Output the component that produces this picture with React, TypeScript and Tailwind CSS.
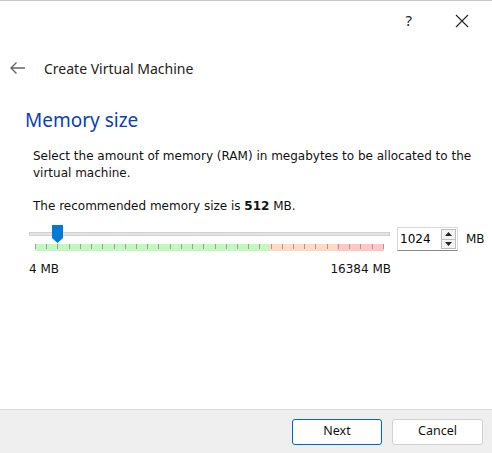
import React from "react";

const ticks = Array.from({ length: 32 }, (_, i) => i);

export default function App() {
  return (
    <div className="flex h-[453px] w-[492px] flex-col overflow-hidden bg-white font-['Noto_Sans',sans-serif] text-[#1a1a1a]">
      {/* title bar */}
      <div className="flex h-[40px] items-center justify-end border-t border-[#c8c8c8]">
        <span className="mr-[43px] text-[15px] text-[#222]">?</span>
        <svg className="mr-[23px] h-[14px] w-[14px]" viewBox="0 0 14 14" fill="none" stroke="#222" strokeWidth="1.1">
          <path d="M1 1 L13 13 M13 1 L1 13" />
        </svg>
      </div>

      {/* header */}
      <div className="flex h-[56px] items-center pl-[9px]">
        <svg className="h-[14px] w-[17px]" viewBox="0 0 17 14" fill="none" stroke="#666" strokeWidth="1.4">
          <path d="M16 7 H2 M7.5 1.5 L2 7 L7.5 12.5" />
        </svg>
        <span className="ml-[18px] text-[14px] text-[#222]">Create Virtual Machine</span>
      </div>

      {/* content */}
      <div className="flex-1 pl-[25px] pr-[7px]">
        <h1 className="mt-[10px] text-[19px] leading-[28px] text-[#0a3fb8]">Memory size</h1>

        <div className="mt-[14px] pl-[8px] font-['DejaVu_Sans',sans-serif] text-[12px] leading-[17px] text-[#111]">
          <p>Select the amount of memory (RAM) in megabytes to be allocated to the virtual machine.</p>
          <p className="mt-[16px]">
            The recommended memory size is <b>512</b> MB.
          </p>
        </div>

        <div className="mt-[10px] flex items-start">
          <div className="w-[366px] shrink-0 pl-[4px]">
            <div className="relative h-[26px]">
              <div className="absolute left-0 right-[1px] top-[7px] h-[4px] border border-[#d2d2d2] bg-[#e4e4e4]" />
              <svg className="absolute left-[23px] top-0 h-[18px] w-[11px]" viewBox="0 0 11 18">
                <path d="M0 0 H11 V13 L5.5 18 L0 13 Z" fill="#0078d7" />
              </svg>
              <div className="absolute left-[6px] top-[19px] flex h-[7px] w-[349px]">
                <div className="w-[234px] bg-[#c2f7c0]" />
                <div className="w-[68px] bg-[#ffd9c4]" />
                <div className="flex-1 bg-[#ffc6c6]" />
                <div className="absolute inset-x-0 top-0 flex justify-between">
                  {ticks.map((i) => (
                    <div key={i} className="h-[5px] w-px bg-[#a09a98]" />
                  ))}
                </div>
              </div>
            </div>
            <div className="mt-[9px] flex justify-between font-['DejaVu_Sans',sans-serif] text-[12px] text-[#111]">
              <span>4 MB</span>
              <span>16384 MB</span>
            </div>
          </div>

          <div className="ml-[6px] mt-[2px] flex h-[24px] w-[61px] shrink-0 items-stretch border border-[#d9d9d9] border-b-[#8a8a8a] bg-white">
            <span className="flex-1 pl-[2px] font-['DejaVu_Sans',sans-serif] text-[12px] leading-[22px] text-black">1024</span>
            <div className="my-[1px] mr-[1px] flex w-[15px] flex-col border border-[#bdbdbd] bg-[#f3f3f3]">
              <div className="flex flex-1 items-center justify-center border-b border-[#bdbdbd]">
                <svg width="7" height="4" viewBox="0 0 7 4"><path d="M0 4 L3.5 0 L7 4 Z" fill="#222" /></svg>
              </div>
              <div className="flex flex-1 items-center justify-center">
                <svg width="7" height="4" viewBox="0 0 7 4"><path d="M0 0 L3.5 4 L7 0 Z" fill="#222" /></svg>
              </div>
            </div>
          </div>
          <span className="ml-[8px] mt-[5px] font-['DejaVu_Sans',sans-serif] text-[12px] text-[#111]">MB</span>
        </div>
      </div>

      {/* footer */}
      <div className="flex h-[44px] items-center justify-end gap-[10px] border-t border-[#dcdcdc] bg-[#efefef] pr-[9px]">
        <button className="h-[26px] w-[90px] rounded-[3px] border border-[#0067c0] bg-white text-[12.5px] text-[#111]">
          Next
        </button>
        <button className="h-[26px] w-[91px] rounded-[3px] border border-[#d0d0d0] bg-white text-[12.5px] text-[#111]">
          Cancel
        </button>
      </div>
    </div>
  );
}
